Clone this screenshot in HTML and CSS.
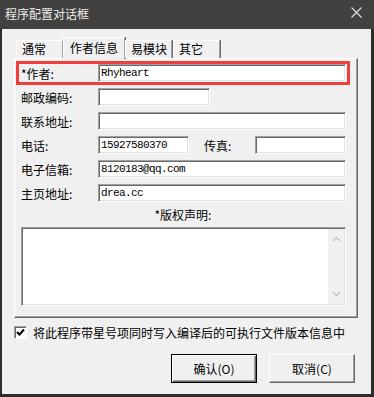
FILE: index.html
```html
<!DOCTYPE html>
<html>
<head>
  <title>程序配置对话框</title>
  <link rel="stylesheet" href="styles.css">
</head>
<body>
  <div class="window">
    <div class="titlebar">
      <span class="title">程序配置对话框</span>
      <svg class="close" width="11" height="11" viewBox="0 0 11 11">
        <path d="M0.5 0.5 L10.5 10.5 M10.5 0.5 L0.5 10.5" stroke="#dcdcdc" stroke-width="1.2" fill="none"/>
      </svg>
    </div>
    <div class="client">
      <div class="tabs">
        <div class="tab">通常</div>
        <div class="tab active">作者信息</div>
        <div class="tab">易模块</div>
        <div class="tab last">其它</div>
      </div>
      <div class="panel">
        <div class="row required">
          <label>*作者:</label>
          <div class="field mono">Rhyheart</div>
        </div>
        <div class="row">
          <label>邮政编码:</label>
          <div class="field postal"></div>
        </div>
        <div class="row">
          <label>联系地址:</label>
          <div class="field"></div>
        </div>
        <div class="row">
          <label>电话:</label>
          <div class="field phone mono">15927580370</div>
          <label class="fax-label">传真:</label>
          <div class="field fax"></div>
        </div>
        <div class="row">
          <label>电子信箱:</label>
          <div class="field mono">8120183@qq.com</div>
        </div>
        <div class="row">
          <label>主页地址:</label>
          <div class="field mono">drea.cc</div>
        </div>
        <div class="section-title">*版权声明:</div>
        <div class="memo">
          <div class="memo-text"></div>
          <div class="scroll">
            <svg width="9" height="6" viewBox="0 0 9 6"><path d="M1 5 L4.5 1.5 L8 5" stroke="#c4c4c4" stroke-width="1.3" fill="none"/></svg>
            <svg width="9" height="6" viewBox="0 0 9 6"><path d="M1 1 L4.5 4.5 L8 1" stroke="#c4c4c4" stroke-width="1.3" fill="none"/></svg>
          </div>
        </div>
      </div>
      <div class="check-row">
        <span class="checkbox">
          <svg width="9" height="9" viewBox="0 0 9 9"><path d="M1 4 L3.5 6.5 L8 1.5" stroke="#000" stroke-width="2" fill="none"/></svg>
        </span>
        <span>将此程序带星号项同时写入编译后的可执行文件版本信息中</span>
      </div>
      <div class="buttons">
        <div class="button default">确认(O)</div>
        <div class="button">取消(C)</div>
      </div>
    </div>
  </div>
</body>
</html>
```

FILE: styles.css
```css
body {
  margin: 0;
  font-family: "Noto Sans CJK SC", sans-serif;
  font-size: 12px;
  color: #000;
}

.window {
  width: 374px;
  height: 397px;
  box-sizing: border-box;
  padding: 0 3px 3px 2px;
  background-color: #2c2c2c;
  display: flex;
  flex-direction: column;
}

.titlebar {
  height: 29px;
  margin: 0 -3px 0 -2px;
  padding: 0 12px 0 5px;
  background-color: #42413f;
  display: flex;
  align-items: center;
  justify-content: space-between;
  color: #ececec;
}

.title {
  font-size: 12px;
  margin-top: -3px;
}

.close {
  margin-top: -4px;
}

.client {
  flex: 1;
  background-color: #f0f0f0;
  display: flex;
  flex-direction: column;
}

/* tabs */
.tabs {
  display: flex;
  align-items: flex-end;
  margin-top: 8px;
  padding-left: 14px;
  height: 21px;
  position: relative;
  z-index: 1;
}

.tab {
  box-sizing: border-box;
  width: 47px;
  height: 18px;
  padding-left: 5px;
  line-height: 16px;
  border-top: 1px solid #fff;
  border-left: 1px solid #fff;
  border-right: 1px solid #a0a0a0;
  box-shadow: 1px 0 0 #696969;
  background-color: #f0f0f0;
}

.tab.active {
  width: 62px;
  height: 22px;
  margin-bottom: -1px;
  padding-left: 6px;
  line-height: 20px;
}

.tab.last {
  margin-left: 1px;
}

/* panel */
.panel {
  margin-left: 12px;
  width: 344px;
  height: 260px;
  box-sizing: border-box;
  padding: 2px 1px 0 1px;
  border-top: 1px solid #fff;
  border-left: 1px solid #fff;
  border-right: 1px solid #696969;
  border-bottom: 1px solid #696969;
  box-shadow: inset -1px -1px 0 #a0a0a0;
}

.row {
  display: flex;
  align-items: center;
  width: 334px;
  height: 24px;
  box-sizing: border-box;
  border: 3px solid transparent;
}

.row.required {
  border-color: #f23d3d;
}

.row label {
  width: 77px;
  padding-left: 2px;
  white-space: nowrap;
}

.field {
  box-sizing: border-box;
  width: 248px;
  height: 18px;
  padding-left: 2px;
  background-color: #fff;
  border-top: 1px solid #a0a0a0;
  border-left: 1px solid #a0a0a0;
  border-right: 1px solid #fff;
  border-bottom: 1px solid #fff;
  box-shadow: inset 1px 1px 0 #696969, inset -1px -1px 0 #e3e3e3;
  line-height: 16px;
}

.mono {
  font-family: "Liberation Mono", monospace;
  font-size: 11px;
  letter-spacing: -0.6px;
}

.field.postal {
  width: 112px;
}

.field.phone {
  width: 91px;
}

.row .fax-label {
  width: 51px;
  padding-left: 15px;
}

.field.fax {
  width: 91px;
}

.section-title {
  height: 22px;
  line-height: 20px;
  text-align: center;
  padding-right: 6px;
}

.memo {
  margin-left: 5px;
  width: 325px;
  height: 79px;
  box-sizing: border-box;
  display: flex;
  background-color: #fff;
  border-top: 1px solid #a0a0a0;
  border-left: 1px solid #a0a0a0;
  border-right: 1px solid #fff;
  border-bottom: 1px solid #fff;
  box-shadow: inset 1px 1px 0 #696969, inset -1px -1px 0 #e3e3e3;
}

.memo-text {
  flex: 1;
}

.scroll {
  width: 16px;
  margin: 1px 1px 1px 0;
  background-color: #f0f0f0;
  display: flex;
  flex-direction: column;
  justify-content: space-between;
  align-items: center;
  padding: 7px 0 7px;
}

/* bottom */
.check-row {
  display: flex;
  align-items: center;
  margin: 7px 0 0 12px;
  height: 15px;
}

.checkbox {
  box-sizing: border-box;
  width: 13px;
  height: 13px;
  margin-right: 6px;
  background-color: #fff;
  border-top: 1px solid #a0a0a0;
  border-left: 1px solid #a0a0a0;
  border-right: 1px solid #fff;
  border-bottom: 1px solid #fff;
  box-shadow: inset 1px 1px 0 #696969;
  display: flex;
  align-items: center;
  justify-content: center;
}

.buttons {
  display: flex;
  justify-content: flex-end;
  gap: 12px;
  margin-top: 14px;
  padding-right: 16px;
}

.button {
  box-sizing: border-box;
  width: 86px;
  height: 29px;
  display: flex;
  align-items: center;
  justify-content: center;
  background-color: #f0f0f0;
  border-top: 1px solid #fff;
  border-left: 1px solid #fff;
  border-right: 1px solid #696969;
  border-bottom: 1px solid #696969;
  box-shadow: inset -1px -1px 0 #a0a0a0;
}

.button.default {
  border: 1px solid #000;
  box-shadow: inset 1px 1px 0 #fff, inset -1px -1px 0 #696969, inset -2px -2px 0 #a0a0a0;
}
```
